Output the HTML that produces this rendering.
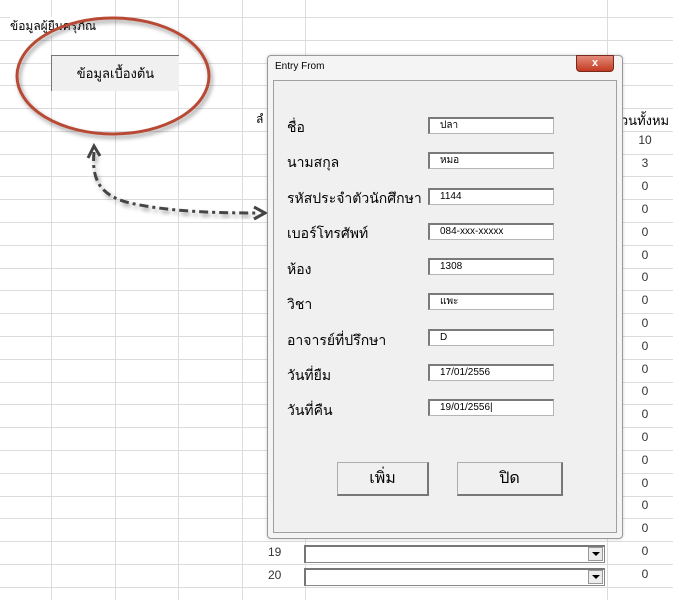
<!DOCTYPE html>
<html><head><meta charset="utf-8"><style>
body{margin:0;width:673px;height:600px;overflow:hidden;background:#fff;font-family:"Liberation Sans","DejaVu Sans",sans-serif;position:relative}
.a{position:absolute}
.vl{position:absolute;top:0;height:600px;width:1px;background:#dadcdd}
.hl{position:absolute;left:0;width:673px;height:1px;background:#dadcdd}
.lab{position:absolute;left:287px;font-size:14px;color:#000;font-weight:500}
.fld{position:absolute;left:428px;background:#fff;border:1px solid #b5b5b5;border-top:2px solid #7a7a7a;border-left:2px solid #7a7a7a;font-size:10px;line-height:14px;padding-left:10px;box-sizing:border-box;width:126px;height:17px}
.num{position:absolute;left:620px;width:50px;text-align:center;font-size:12px;color:#333}
.btn{position:absolute;background:#f0f0f0;border:1px solid #adadad;border-right:2px solid #777;border-bottom:2px solid #777;font-size:16px;text-align:center;box-sizing:border-box}
.combo{position:absolute;left:304px;width:301px;height:18px;background:#fff;border:1px solid #888;border-top:2px solid #777;border-left:2px solid #777;box-sizing:border-box}
.combo i{position:absolute;right:1px;top:0px;width:15px;height:14px;background:#ececec;border:1px solid #999;box-sizing:border-box}
.combo i:after{content:"";position:absolute;left:3px;top:4px;border-left:4px solid transparent;border-right:4px solid transparent;border-top:4px solid #000}
</style></head><body>
<div class="vl" style="left:51px"></div><div class="vl" style="left:115px"></div><div class="vl" style="left:178px"></div><div class="vl" style="left:242px"></div><div class="vl" style="left:305px"></div><div class="vl" style="left:607px"></div>
<div class="hl" style="top:17px"></div><div class="hl" style="top:40px"></div><div class="hl" style="top:63px"></div><div class="hl" style="top:85px"></div><div class="hl" style="top:108px"></div><div class="hl" style="top:131px"></div><div class="hl" style="top:154px"></div><div class="hl" style="top:176px"></div><div class="hl" style="top:199px"></div><div class="hl" style="top:222px"></div><div class="hl" style="top:245px"></div><div class="hl" style="top:268px"></div><div class="hl" style="top:290px"></div><div class="hl" style="top:313px"></div><div class="hl" style="top:336px"></div><div class="hl" style="top:359px"></div><div class="hl" style="top:382px"></div><div class="hl" style="top:404px"></div><div class="hl" style="top:427px"></div><div class="hl" style="top:450px"></div><div class="hl" style="top:473px"></div><div class="hl" style="top:496px"></div><div class="hl" style="top:518px"></div><div class="hl" style="top:541px"></div><div class="hl" style="top:564px"></div><div class="hl" style="top:587px"></div>
<div class="a" style="left:10px;top:17px;font-size:12px;background:#fff">ข้อมูลผู้ยืมครุภัณ</div>
<div class="a" style="left:256px;top:110px;font-size:12px;background:#fff">ลํ</div>
<div class="a" style="left:608px;top:110px;width:65px;font-size:13px;background:#fff;padding-left:4px">นวนทั้งหม</div>
<div class="btn" style="left:51px;top:55px;width:128px;height:36px;border:none;border-left:1px solid #777;border-top:1px solid #777;font-size:13px;line-height:36px">ข้อมูลเบื้องต้น</div>
<div class="num" style="top:133px">10</div><div class="num" style="top:156px">3</div>
<div class="num" style="top:179px">0</div><div class="num" style="top:202px">0</div><div class="num" style="top:225px">0</div><div class="num" style="top:248px">0</div><div class="num" style="top:270px">0</div><div class="num" style="top:293px">0</div><div class="num" style="top:316px">0</div><div class="num" style="top:339px">0</div><div class="num" style="top:362px">0</div><div class="num" style="top:384px">0</div><div class="num" style="top:407px">0</div><div class="num" style="top:430px">0</div><div class="num" style="top:453px">0</div><div class="num" style="top:476px">0</div><div class="num" style="top:498px">0</div><div class="num" style="top:521px">0</div><div class="num" style="top:544px">0</div><div class="num" style="top:567px">0</div>
<div class="a" style="left:268px;top:545px;font-size:12px;color:#333">19</div>
<div class="a" style="left:268px;top:568px;font-size:12px;color:#333">20</div>
<div class="combo" style="top:545px"><i></i></div>
<div class="combo" style="top:568px"><i></i></div>
<svg class="a" style="left:0;top:0" width="673" height="600">
<defs><filter id="s"><feDropShadow dx="2" dy="3" stdDeviation="2" flood-opacity="0.4"/></filter></defs>
<ellipse cx="113" cy="76" rx="96" ry="58" fill="none" stroke="#b84a35" stroke-width="3" filter="url(#s)"/>
<path d="M94,152 C92,175 96,195 130,203 C170,212 220,213 258,213" fill="none" stroke="#444" stroke-width="3" stroke-dasharray="9,4,3,4" filter="url(#s)"/>
<path d="M88,158 L94,146 L100,156" fill="none" stroke="#444" stroke-width="3"/>
<path d="M254,207 L265,213 L254,219" fill="none" stroke="#444" stroke-width="3"/>
</svg>
<div class="a" style="left:267px;top:55px;width:356px;height:484px;background:#f4f4f4;border:1px solid #999;border-radius:4px;box-sizing:border-box;box-shadow:0 0 3px rgba(0,0,0,.2)"></div>
<div class="a" style="left:275px;top:61px;font-size:10px">Entry From</div>
<div class="a" style="left:576px;top:55px;width:38px;height:17px;background:linear-gradient(#e48b7a,#c23a22);border:1px solid #7a2a1c;border-radius:0 0 4px 4px;box-sizing:border-box;color:#fff;font-size:11px;font-weight:bold;text-align:center;line-height:15px">x</div>
<div class="a" style="left:273px;top:80px;width:344px;height:453px;background:#f0f0f0;border:1px solid #a0a0a0;box-sizing:border-box"></div>
<div class="lab" style="top:117px">ชื่อ</div><div class="fld" style="top:117px">ปลา</div>
<div class="lab" style="top:152px">นามสกุล</div><div class="fld" style="top:152px">หมอ</div>
<div class="lab" style="top:188px">รหัสประจำตัวนักศึกษา</div><div class="fld" style="top:188px">1144</div>
<div class="lab" style="top:223px">เบอร์โทรศัพท์</div><div class="fld" style="top:223px">084-xxx-xxxxx</div>
<div class="lab" style="top:259px">ห้อง</div><div class="fld" style="top:258px">1308</div>
<div class="lab" style="top:294px">วิชา</div><div class="fld" style="top:293px">แพะ</div>
<div class="lab" style="top:330px">อาจารย์ที่ปรึกษา</div><div class="fld" style="top:329px">D</div>
<div class="lab" style="top:365px">วันที่ยืม</div><div class="fld" style="top:364px">17/01/2556</div>
<div class="lab" style="top:400px">วันที่คืน</div><div class="fld" style="top:399px">19/01/2556|</div>
<div class="btn" style="left:337px;top:462px;width:92px;height:34px;line-height:32px">เพิ่ม</div>
<div class="btn" style="left:457px;top:462px;width:106px;height:34px;line-height:32px">ปิด</div>
</body></html>
